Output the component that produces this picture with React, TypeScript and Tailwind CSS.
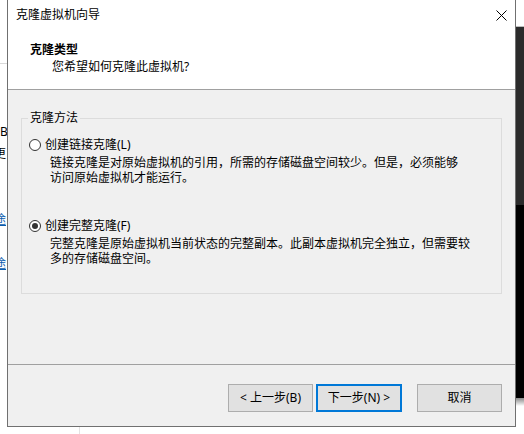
import { useState } from "react";

type Option = { id: "linked" | "full"; label: string; lines: string[] };

const options: Option[] = [
  {
    id: "linked",
    label: "创建链接克隆(L)",
    lines: ["链接克隆是对原始虚拟机的引用，所需的存储磁盘空间较少。但是，必须能够", "访问原始虚拟机才能运行。"],
  },
  {
    id: "full",
    label: "创建完整克隆(F)",
    lines: ["完整克隆是原始虚拟机当前状态的完整副本。此副本虚拟机完全独立，但需要较", "多的存储磁盘空间。"],
  },
];

function Radio({ checked }: { checked: boolean }) {
  return (
    <span className="flex h-[12px] w-[12px] shrink-0 items-center justify-center rounded-full border border-[#333333] bg-white">
      {checked && <span className="h-[6px] w-[6px] rounded-full bg-[#333333]" />}
    </span>
  );
}

export default function App() {
  const [mode, setMode] = useState<Option["id"]>("full");

  return (
    <div className="relative h-[434px] w-[524px] overflow-hidden bg-white font-['Noto_Sans','Noto_Sans_CJK_SC',sans-serif] text-[12px] text-black">
      {/* desktop behind the dialog */}
      <div className="flex h-full">
        <div className="flex w-[7px] flex-col overflow-hidden whitespace-nowrap leading-[16px]">
          <div className="h-[63px] shrink-0" />
          <div className="h-px shrink-0 bg-[#d9d9d9]" />
          <div className="h-[60px] shrink-0" />
          <div className="h-[16px] shrink-0">B</div>
          <div className="mt-[6px] h-[16px] shrink-0 -ml-[6px]">更</div>
          <div className="mt-[50px] h-[16px] shrink-0 -ml-[6px] text-[#0b5cad] underline">途</div>
          <div className="mt-[28px] h-[16px] shrink-0 -ml-[6px] text-[#0b5cad] underline">途</div>
        </div>
        <div className="flex flex-1">
          <div className="w-[73px] border-r border-[#e3e3e3]" />
          <div className="flex-1" />
        </div>
        <div className="flex w-[8px] flex-col">
          <div className="h-[26px] shrink-0 bg-white" />
          <div className="h-px shrink-0 bg-[#bdbdbd]" />
          <div className="h-[178px] shrink-0 bg-[#2b2b2b]" />
          <div className="h-[193px] shrink-0 bg-black" />
          <div className="h-[8px] shrink-0 bg-gradient-to-b from-[#8a8a8a] to-white" />
          <div className="flex-1 bg-white" />
        </div>
      </div>

      {/* wizard dialog */}
      <div className="absolute left-[7px] top-0 flex h-[427px] w-[509px] flex-col border-x border-b border-[#707070] bg-[#f0f0f0]">
        <div className="flex h-[30px] shrink-0 items-center justify-between bg-white pl-[8px] pr-[8px]">
          <span className="leading-[16px]">克隆虚拟机向导</span>
          <svg width="11" height="11" viewBox="0 0 11 11" className="text-black">
            <path d="M0.5 0.5 L10.5 10.5 M10.5 0.5 L0.5 10.5" stroke="currentColor" strokeWidth="1" fill="none" />
          </svg>
        </div>
        <div className="h-[60px] shrink-0 border-b border-[#a0a0a0] bg-white pt-[12px] leading-[16px]">
          <p className="pl-[22px] font-bold">克隆类型</p>
          <p className="mt-[1px] pl-[44px]">您希望如何克隆此虚拟机?</p>
        </div>

        <div className="h-[275px] shrink-0 border-b border-[#a0a0a0] px-[13px] pt-[28px]">
          <div className="relative h-[176px] border border-[#dcdcdc]">
            <span className="absolute -top-[9px] left-[6px] bg-[#f0f0f0] px-[2px] leading-[16px]">克隆方法</span>
            <div className="flex flex-col gap-[33px] pl-[7px] pt-[18px]">
              {options.map((o) => (
                <button key={o.id} type="button" onClick={() => setMode(o.id)} className="flex flex-col text-left">
                  <span className="flex h-[16px] items-center gap-[4px] leading-[16px]">
                    <Radio checked={mode === o.id} />
                    <span>{o.label}</span>
                  </span>
                  <span className="mt-[2px] pl-[21px] leading-[15px]">
                    {o.lines.map((l) => (
                      <span key={l} className="block whitespace-nowrap">
                        {l}
                      </span>
                    ))}
                  </span>
                </button>
              ))}
            </div>
          </div>
        </div>

        <div className="flex flex-1 items-start justify-end pr-[13px] pt-[19px]">
          <button type="button" className="flex h-[28px] w-[85px] items-center justify-center border border-[#adadad] bg-[#e1e1e1]">
            &lt; 上一步(B)
          </button>
          <button type="button" className="ml-[3px] flex h-[28px] w-[86px] items-center justify-center border-2 border-[#0078d7] bg-[#e1e1e1]">
            下一步(N) &gt;
          </button>
          <button type="button" className="ml-[15px] flex h-[28px] w-[85px] items-center justify-center border border-[#adadad] bg-[#e1e1e1]">
            取消
          </button>
        </div>
      </div>
    </div>
  );
}
